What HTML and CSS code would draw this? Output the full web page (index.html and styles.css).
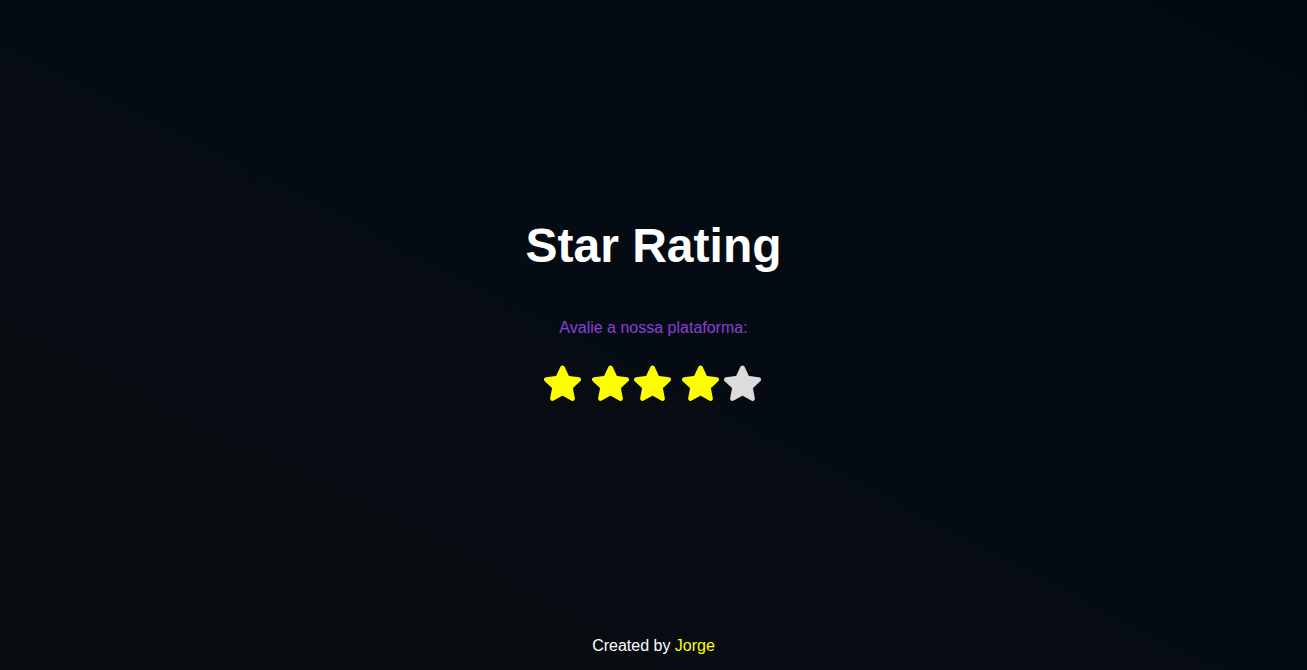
FILE: index.html
```html
<!DOCTYPE html>
<html lang="pt">
<head>
<meta charset="utf-8">
<title>Star Rating</title>
<link rel="stylesheet" href="styles.css">
</head>
<body>
<main class="main">
  <h1 class="title">Star Rating</h1>
  <p class="subtitle">Avalie a nossa plataforma:</p>
  <div class="stars">
    <svg class="star on" viewBox="0 0 38 37"><polygon points="19,2.5 23.94,13.05 35.5,14.49 26.99,22.45 29.2,33.89 19,28.25 8.8,33.89 11.01,22.45 2.5,14.49 14.06,13.05"/></svg>
    <svg class="star on" viewBox="0 0 38 37"><polygon points="19,2.5 23.94,13.05 35.5,14.49 26.99,22.45 29.2,33.89 19,28.25 8.8,33.89 11.01,22.45 2.5,14.49 14.06,13.05"/></svg>
    <svg class="star on" viewBox="0 0 38 37"><polygon points="19,2.5 23.94,13.05 35.5,14.49 26.99,22.45 29.2,33.89 19,28.25 8.8,33.89 11.01,22.45 2.5,14.49 14.06,13.05"/></svg>
    <svg class="star on" viewBox="0 0 38 37"><polygon points="19,2.5 23.94,13.05 35.5,14.49 26.99,22.45 29.2,33.89 19,28.25 8.8,33.89 11.01,22.45 2.5,14.49 14.06,13.05"/></svg>
    <svg class="star off" viewBox="0 0 38 37"><polygon points="19,2.5 23.94,13.05 35.5,14.49 26.99,22.45 29.2,33.89 19,28.25 8.8,33.89 11.01,22.45 2.5,14.49 14.06,13.05"/></svg>
  </div>
</main>
<footer class="footer">Created by <span class="author">Jorge</span></footer>
</body>
</html>
```

FILE: styles.css
```css
html, body {
  margin: 0;
  padding: 0;
}
body {
  min-height: 100vh;
  display: flex;
  flex-direction: column;
  background: linear-gradient(to bottom left, #010913, #0a0e12);
  font-family: "Liberation Sans", Arial, sans-serif;
  color: #fff;
  box-sizing: border-box;
}
.main {
  flex: 1;
  display: flex;
  flex-direction: column;
  align-items: center;
  padding-top: 218px;
}
.title {
  margin: 0;
  font-size: 48px;
  font-weight: 700;
  line-height: 55px;
  color: #fff;
}
.subtitle {
  margin: 46px 0 0;
  font-size: 16px;
  line-height: 18px;
  color: #8a3fd6;
}
.stars {
  display: flex;
  margin-top: 28px;
  margin-left: -2px;
}
.star {
  width: 37px;
  height: 37px;
  display: block;
}
.star polygon {
  stroke-width: 5;
  stroke-linejoin: round;
}
.star.on polygon {
  fill: #ffff00;
  stroke: #ffff00;
}
.star.off polygon {
  fill: #dcdcdc;
  stroke: #dcdcdc;
}
.star:nth-child(2) { margin-left: 11px; }
.star:nth-child(3) { margin-left: 5px; }
.star:nth-child(4) { margin-left: 11px; }
.star:nth-child(5) { margin-left: 5px; }
.footer {
  text-align: center;
  font-size: 16px;
  line-height: 18px;
  padding-bottom: 15px;
  color: #fff;
}
.author {
  color: #ffff00;
}
```
